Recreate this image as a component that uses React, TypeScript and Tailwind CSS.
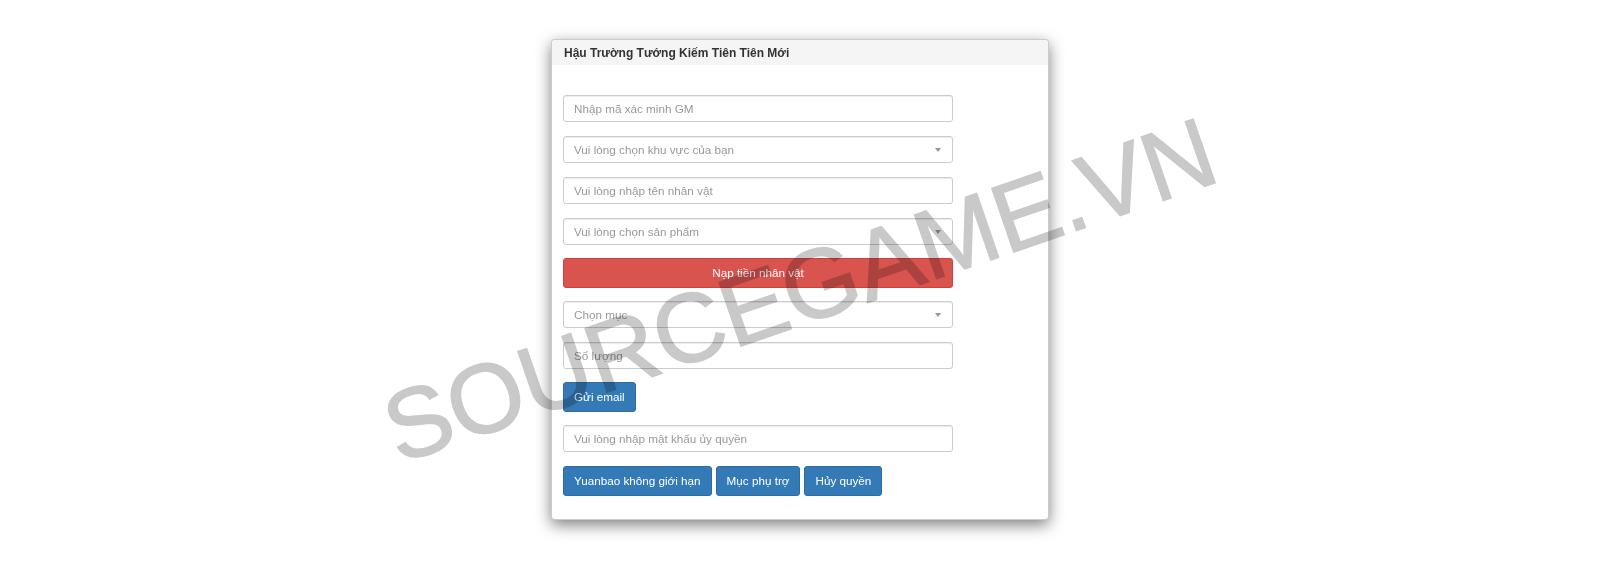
import React from "react";

const font = { fontFamily: '"Liberation Sans", Arial, sans-serif' };

const Field = ({ placeholder, className = "" }: { placeholder: string; className?: string }) => (
  <input
    type="text"
    placeholder={placeholder}
    className={`block w-[390px] h-[27px] px-[10px] text-[11.7px] text-[#555] bg-white border border-[#ccc] rounded-[3px] shadow-[inset_0_1px_1px_rgba(0,0,0,0.075)] outline-none placeholder:text-[#999] ${className}`}
  />
);

const Select = ({ placeholder, className = "" }: { placeholder: string; className?: string }) => (
  <div className={`relative w-[390px] ${className}`}>
    <select
      defaultValue=""
      className="block w-full h-[27px] pl-[10px] pr-6 text-[11.7px] text-[#999] bg-white border border-[#ccc] rounded-[3px] shadow-[inset_0_1px_1px_rgba(0,0,0,0.075)] outline-none appearance-none"
    >
      <option value="" disabled>
        {placeholder}
      </option>
    </select>
    {/* caret */}
    <span className="absolute right-[12px] top-[12px] w-0 h-0 border-l-[3px] border-r-[3px] border-t-[4px] border-l-transparent border-r-transparent border-t-[#999]" />
  </div>
);

const BlueButton = ({ children }: { children: React.ReactNode }) => (
  <button className="h-[30px] px-[10px] text-[11.7px] text-white bg-[#337ab7] border border-[#2e6da4] rounded-[3px]">
    {children}
  </button>
);

export default function App() {
  return (
    <div className="relative w-full h-[579px] bg-white overflow-hidden" style={font}>
      {/* Panel */}
      <div className="mx-auto mt-[39px] w-[498px] h-[481px] bg-white border border-black/20 rounded-[4px] shadow-[0_5px_15px_rgba(0,0,0,0.5)] overflow-hidden">
        <div className="h-[25px] bg-[#f5f5f5] px-[12px] flex items-center">
          <h3 className="text-[12px] font-bold text-[#333]">Hậu Trường Tướng Kiếm Tiên Tiên Mới</h3>
        </div>

        <div className="px-[11px] pt-[30px]">
          <Field placeholder="Nhập mã xác minh GM" />
          <Select placeholder="Vui lòng chọn khu vực của bạn" className="mt-[14px]" />
          <Field placeholder="Vui lòng nhập tên nhân vật" className="mt-[14px]" />
          <Select placeholder="Vui lòng chọn sản phẩm" className="mt-[14px]" />

          <button className="block mt-[13px] w-[390px] h-[30px] text-[11.7px] text-white bg-[#d9534f] border border-[#d43f3a] rounded-[3px]">
            Nạp tiền nhân vật
          </button>

          <Select placeholder="Chọn mục" className="mt-[13px]" />
          <Field placeholder="Số lượng" className="mt-[14px]" />

          <div className="mt-[13px]">
            <BlueButton>Gửi email</BlueButton>
          </div>

          <Field placeholder="Vui lòng nhập mật khẩu ủy quyền" className="mt-[13px]" />

          <div className="mt-[14px] flex gap-[4px]">
            <BlueButton>Yuanbao không giới hạn</BlueButton>
            <BlueButton>Mục phụ trợ</BlueButton>
            <BlueButton>Hủy quyền</BlueButton>
          </div>
        </div>
      </div>

      {/* Watermark */}
      <div className="absolute inset-0 flex items-center justify-center pointer-events-none mix-blend-multiply">
        <span className="block -rotate-[19deg] text-[98px] leading-none text-[#c9c9c9] [-webkit-text-stroke:1.5px_#c9c9c9] whitespace-nowrap select-none">
          SOURCEGAME.VN
        </span>
      </div>
    </div>
  );
}
